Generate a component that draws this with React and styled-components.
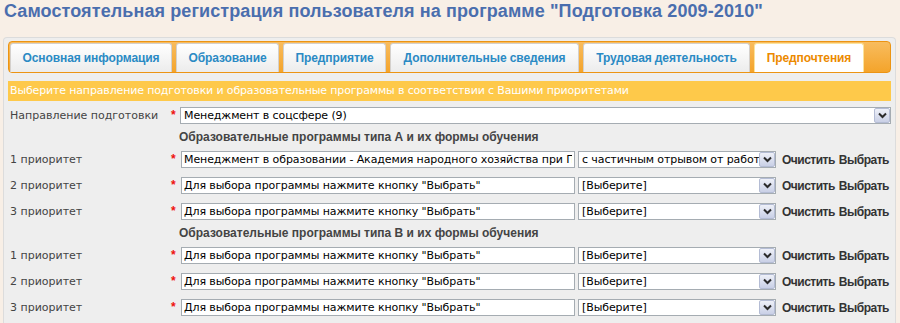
import React from "react"
import styled, { createGlobalStyle } from "styled-components"

const GlobalStyle = createGlobalStyle`
  body {
    margin: 0;
    background: #f8efe6;
    font-family: "Liberation Sans", Arial, sans-serif;
  }
`

const Page = styled.div`
  width: 900px;
  height: 323px;
  overflow: hidden;
`

const Title = styled.h1`
  margin: 0;
  padding: 0 0 0 4px;
  height: 37px;
  line-height: 22px;
  font-size: 18px;
  font-weight: bold;
  letter-spacing: 0.1px;
  color: #4a6eae;
`

const Panel = styled.div`
  margin-left: 3px;
  width: 893px;
  box-sizing: border-box;
  border: 1px solid #dcdcdc;
  border-bottom: none;
  border-radius: 4px 4px 0 0;
  background: #eeeeee;
  padding: 3px 4px 0 4px;
  min-height: 300px;
`

const TabBar = styled.div`
  display: flex;
  align-items: flex-end;
  gap: 4px;
  height: 32px;
  box-sizing: border-box;
  padding: 1px 0 0 1px;
  border: 1px solid #ec9413;
  border-radius: 4px;
  background: linear-gradient(#f8bc5e, #f4a42b);
`

const Tab = styled.div`
  width: ${p => p.$w}px;
  flex: none;
  height: 29px;
  box-sizing: border-box;
  display: flex;
  align-items: center;
  justify-content: center;
  border: 1px solid ${p => (p.$active ? "#fbe39c" : "#d4d0cc")};
  border-bottom: none;
  border-radius: 3px 3px 0 0;
  background: ${p => (p.$active ? "#ffffff" : "linear-gradient(#ffffff, #ececec)")};
  color: ${p => (p.$active ? "#ec8a00" : "#2a8ac4")};
  font-size: 12px;
  font-weight: bold;
  letter-spacing: -0.1px;
  white-space: nowrap;
`

const Banner = styled.div`
  margin-top: 8px;
  height: 20px;
  line-height: 20px;
  padding-left: 2px;
  background: #fec94a;
  color: #ffffff;
  font-family: "DejaVu Sans", Tahoma, sans-serif;
  font-size: 11px;
  letter-spacing: -0.15px;
  white-space: nowrap;
`

const Form = styled.div`
  padding-left: 2px;
`

const Row = styled.div`
  display: flex;
  align-items: center;
  height: 17px;
  margin-top: ${p => p.$top || 0}px;
`

const Label = styled.div`
  width: 161px;
  flex: none;
  color: #444444;
  font-family: "DejaVu Sans", Tahoma, sans-serif;
  font-size: 11px;
  white-space: nowrap;
`

const Star = styled.span`
  width: ${p => p.$w || 10}px;
  flex: none;
  color: #ee1111;
  font-size: 12px;
  font-weight: bold;
  line-height: 17px;
  align-self: flex-start;
`

const TextBox = styled.input`
  width: 394px;
  flex: none;
  height: 17px;
  box-sizing: border-box;
  margin: 0;
  padding: 0 2px;
  border: 1px solid #a5acb2;
  background: #ffffff;
  color: #000000;
  font-family: "DejaVu Sans", Tahoma, sans-serif;
  font-size: 11px;
  letter-spacing: -0.1px;
  outline: none;
`

const Select = styled.div`
  display: flex;
  align-items: stretch;
  flex: none;
  width: ${p => p.$w}px;
  height: 17px;
  box-sizing: border-box;
  margin-left: ${p => p.$ml || 0}px;
  border: 1px solid #a5acb2;
  background: #ffffff;
`

const SelectText = styled.div`
  flex: 1;
  overflow: hidden;
  padding-left: 3px;
  line-height: 15px;
  color: #000000;
  font-family: "DejaVu Sans", Tahoma, sans-serif;
  font-size: 11px;
  letter-spacing: -0.1px;
  white-space: nowrap;
`

const Arrow = styled.div`
  width: 16px;
  flex: none;
  box-sizing: border-box;
  border: 1px solid #b4bcd4;
  border-radius: 2px;
  background: linear-gradient(#eef0f8, #c9d0e6);
  display: flex;
  align-items: center;
  justify-content: center;
`

const Links = styled.div`
  flex: none;
  margin-left: 6px;
  display: flex;
  gap: 4px;
  color: #333333;
  font-size: 12px;
  font-weight: bold;
  letter-spacing: -0.5px;
  white-space: nowrap;
`

const SubHead = styled.div`
  height: 27px;
  line-height: 27px;
  padding-left: 169px;
  color: #444444;
  font-size: 12px;
  font-weight: bold;
`

const Group = styled.div`
  display: flex;
  flex-direction: column;
  gap: 9px;
`

const Chevron = () => (
  <svg width="9" height="7" viewBox="0 0 9 7">
    <path d="M1 1.5 L4.5 5 L8 1.5" fill="none" stroke="#2b2b2b" strokeWidth="2" />
  </svg>
)

const Dropdown = ({ w, ml, children }) => (
  <Select $w={w} $ml={ml}>
    <SelectText>{children}</SelectText>
    <Arrow>
      <Chevron />
    </Arrow>
  </Select>
)

const tabs = [
  { title: "Основная информация", w: 162 },
  { title: "Образование", w: 103 },
  { title: "Предприятие", w: 103 },
  { title: "Дополнительные сведения", w: 189 },
  { title: "Трудовая деятельность", w: 167 },
  { title: "Предпочтения", w: 110 },
]

const HINT = 'Для выбора программы нажмите кнопку "Выбрать"'

const groupA = [
  {
    label: "1 приоритет",
    program: "Менеджмент в образовании - Академия народного хозяйства при Правительстве РФ",
    form: "с частичным отрывом от работы",
  },
  { label: "2 приоритет", program: HINT, form: "[Выберите]" },
  { label: "3 приоритет", program: HINT, form: "[Выберите]" },
]

const groupB = [
  { label: "1 приоритет", program: HINT, form: "[Выберите]" },
  { label: "2 приоритет", program: HINT, form: "[Выберите]" },
  { label: "3 приоритет", program: HINT, form: "[Выберите]" },
]

const PriorityRow = ({ label, program, form }) => (
  <Row>
    <Label>{label}</Label>
    <Star>*</Star>
    <TextBox readOnly value={program} />
    <Dropdown w={198} ml={3}>{form}</Dropdown>
    <Links>
      <span>Очистить</span>
      <span>Выбрать</span>
    </Links>
  </Row>
)

export default function App() {
  return (
    <Page>
      <GlobalStyle />
      <Title>Самостоятельная регистрация пользователя на программе "Подготовка 2009-2010"</Title>
      <Panel>
        <TabBar>
          {tabs.map((t, i) => (
            <Tab key={t.title} $w={t.w} $active={i === tabs.length - 1}>{t.title}</Tab>
          ))}
        </TabBar>
        <Banner>
          Выберите направление подготовки и образовательные программы в соответствии с Вашими приоритетами
        </Banner>
        <Form>
          <Row $top={6}>
            <Label>Направление подготовки</Label>
            <Star $w={9}>*</Star>
            <Dropdown w={711}>Менеджмент в соцсфере (9)</Dropdown>
          </Row>
          <SubHead>Образовательные программы типа А и их формы обучения</SubHead>
          <Group>
            {groupA.map((r, i) => <PriorityRow key={i} {...r} />)}
          </Group>
          <SubHead>Образовательные программы типа В и их формы обучения</SubHead>
          <Group>
            {groupB.map((r, i) => <PriorityRow key={i} {...r} />)}
          </Group>
        </Form>
      </Panel>
    </Page>
  )
}
